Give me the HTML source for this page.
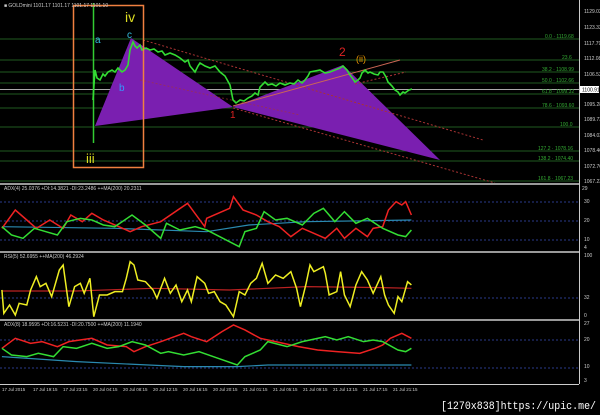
<!DOCTYPE html>
<html><head><style>
body{margin:0;background:#000;width:600px;height:415px;overflow:hidden;font-family:"Liberation Sans",sans-serif}
svg{display:block}
</style></head><body>
<svg width="600" height="415" viewBox="0 0 600 415">
<rect width="600" height="415" fill="#000"/>
<g stroke="#1f5a1f" stroke-width="1">
<line x1="0" y1="39" x2="579" y2="39"/><line x1="0" y1="60" x2="579" y2="60"/>
<line x1="0" y1="72" x2="579" y2="72"/><line x1="0" y1="83" x2="579" y2="83"/>
<line x1="0" y1="94" x2="579" y2="94"/><line x1="0" y1="108" x2="579" y2="108"/>
<line x1="0" y1="127" x2="579" y2="127"/><line x1="0" y1="151" x2="579" y2="151"/>
<line x1="0" y1="161" x2="579" y2="161"/><line x1="0" y1="181" x2="579" y2="181"/>
</g>
<line x1="0" y1="89.5" x2="579" y2="89.5" stroke="#aaa" stroke-width="1"/>
<polygon points="95,126 131,38 233,107" fill="#7a1fb0"/>
<polygon points="233,107 343,65 440,160" fill="#7a1fb0"/>
<line x1="143" y1="40" x2="483" y2="140" stroke="#a33" stroke-dasharray="2,2"/>
<line x1="233" y1="108" x2="495" y2="183" stroke="#a33" stroke-dasharray="2,2"/>
<line x1="140" y1="80" x2="300" y2="115" stroke="#a33" stroke-dasharray="2,2" opacity="0.6"/>
<line x1="233" y1="106" x2="400" y2="60" stroke="#c65" stroke-width="1"/>
<line x1="355" y1="84" x2="406" y2="72" stroke="#a33" stroke-dasharray="2,2"/>
<line x1="93.5" y1="3" x2="93.5" y2="143" stroke="#3c3" stroke-width="1.5"/>
<polyline fill="none" stroke="#3d3" stroke-width="1.6" points="93,100 95,70 97,78 100,80 103,74 105,76 108,72 112,70 115,72 118,68 122,72 125,70 128,65 130,50 133,42 135,46 137,48 140,45 142,50 146,48 150,50 154,49 158,52 162,51 165,55 170,53 175,55 180,58 185,62 188,60 190,66 195,72 198,66 200,63 205,66 210,68 215,66 220,72 225,76 230,85 233,100 236,103 240,100 244,101 248,98 252,96 255,93 258,95 260,87 265,82 268,85 272,84 276,86 280,83 285,85 290,83 294,84 298,80 302,83 305,80 308,76 310,72 315,71 320,70 325,73 330,72 335,70 340,68 343,66 347,70 350,75 353,79 355,82 358,80 360,78 362,73 365,70 368,73 370,72 374,74 378,75 380,72 383,72 386,77 388,82 392,86 395,90 398,92 400,95 403,92 405,93 409,90 412,89"/>
<rect x="73.5" y="5.5" width="70" height="162" fill="none" stroke="#f08040" stroke-width="1.5"/>
<g font-size="10">
<text x="125" y="22" fill="#dd2" font-size="14">iv</text>
<text x="95" y="43" fill="#3bd">a</text>
<text x="127" y="38" fill="#3bd">c</text>
<text x="119" y="91" fill="#39f">b</text>
<text x="86" y="163" fill="#dd2" font-size="13">iii</text>
<text x="230" y="118" fill="#d22">1</text>
<text x="339" y="56" fill="#d22" font-size="12">2</text>
<text x="356" y="62" fill="#e90" font-size="9">(ii)</text>
</g>
<g font-size="5" fill="#3a3">
<text x="545" y="38">0.0 · 1119.68</text><text x="562" y="59">23.6</text>
<text x="542" y="71">38.2 · 1108.99</text><text x="542" y="82">50.0 · 1102.66</text>
<text x="542" y="93">61.8 · 1099.32</text><text x="542" y="107">78.6 · 1093.60</text>
<text x="560" y="126">100.0</text><text x="538" y="150">127.2 · 1078.16</text>
<text x="538" y="160">138.2 · 1074.40</text><text x="538" y="180">161.8 · 1067.23</text>
</g>
<text x="4" y="7" font-size="5" fill="#ccc">■ GOLDmini  1101.17  1101.17  1101.17 1101.10</text>
<rect x="0" y="183" width="579" height="2" fill="#999"/>
<rect x="0" y="251" width="579" height="2" fill="#999"/>
<rect x="0" y="319" width="579" height="2" fill="#999"/>
<line x1="579.5" y1="0" x2="579.5" y2="384" stroke="#ccc"/>
<line x1="0" y1="384.5" x2="579" y2="384.5" stroke="#ccc"/>
<g font-size="5" fill="#ccc">
<text x="584" y="13">1129.03</text><text x="584" y="29">1123.33</text><text x="584" y="45">1117.79</text>
<text x="584" y="60">1112.08</text><text x="584" y="76">1106.53</text><text x="584" y="106">1095.28</text>
<text x="584" y="121">1089.73</text><text x="584" y="137">1084.03</text><text x="584" y="152">1078.46</text>
<text x="584" y="168">1072.76</text><text x="584" y="183">1067.23</text>
<text x="582" y="190">29</text><text x="584" y="203">30</text><text x="584" y="222">20</text><text x="584" y="241">10</text><text x="584" y="249">4</text>
<text x="584" y="257">100</text><text x="584" y="299">32</text><text x="584" y="317">0</text>
<text x="584" y="325">27</text><text x="584" y="341">20</text><text x="584" y="368">10</text><text x="584" y="382">3</text>
</g>
<rect x="580" y="86" width="19" height="7" fill="#fff"/>
<text x="582" y="91.5" font-size="5" fill="#000">1100.91</text>
<g font-size="5" fill="#ccc">
<text x="4" y="190">ADX(4) 25.0376  +DI:14.3821  -DI:23.2486  ++MA(200) 20.2311</text>
<text x="4" y="258">RSI(5) 52.6955  ++MA(200) 46.2924</text>
<text x="4" y="326">ADX(8) 18.9595  +DI:16.5231  -DI:20.7500  ++MA(200) 11.1940</text>
</g>
<g stroke="#2a3a8a" stroke-dasharray="2,2">
<line x1="0" y1="202" x2="579" y2="202"/><line x1="0" y1="221" x2="579" y2="221"/><line x1="0" y1="240" x2="579" y2="240"/>
<line x1="0" y1="298" x2="579" y2="298"/>
<line x1="0" y1="340" x2="579" y2="340"/><line x1="0" y1="368" x2="579" y2="368"/>
</g>
<g transform="translate(0,195) scale(0.3827,0.3333)" fill="none">
<polyline stroke="#2a8ab0" vector-effect="non-scaling-stroke" stroke-width="1.2" points="5,95 300,100 540,110 650,90 800,80 1075,75"/>
<polyline stroke="#e22" vector-effect="non-scaling-stroke" stroke-width="1.5" points="5,100 40,45 70,75 95,100 130,75 165,100 185,60 215,80 240,55 270,75 300,90 340,110 370,95 420,80 490,25 535,95 540,70 600,40 610,5 635,45 670,60 700,80 730,95 760,125 790,100 820,115 850,130 880,100 900,130 930,100 960,125 975,100 1000,95 1015,45 1035,20 1050,30 1060,20 1075,60"/>
<polyline stroke="#3d3" vector-effect="non-scaling-stroke" stroke-width="1.5" points="5,95 30,120 60,130 90,100 120,110 150,120 175,80 210,70 240,75 270,90 300,95 345,60 380,90 420,130 435,85 470,105 510,95 540,105 625,155 640,110 670,100 690,50 720,75 750,70 790,90 820,55 845,40 875,80 900,50 930,85 960,70 1000,100 1040,120 1060,125 1075,105"/>
<polyline stroke="#b22" vector-effect="non-scaling-stroke" stroke-width="1.2" points="5,288 200,288 400,280 600,285 800,275 1000,278 1075,280"/>
<polyline stroke="#ee2" vector-effect="non-scaling-stroke" stroke-width="1.5" points="5,285 10,355 25,330 40,360 50,325 70,330 80,285 95,245 105,275 120,265 135,305 155,225 165,210 180,335 195,275 210,265 220,295 235,250 245,365 260,300 280,300 300,290 320,290 330,250 340,200 350,210 360,255 380,260 400,285 410,310 430,250 445,295 460,270 475,320 490,285 500,320 515,245 535,265 545,295 560,290 575,320 590,330 610,365 625,290 640,300 655,265 670,250 685,205 700,265 720,240 740,250 760,230 775,280 785,335 800,265 810,210 820,230 845,215 850,235 860,300 880,290 890,230 900,300 915,335 930,270 945,230 960,255 975,295 995,245 1005,300 1015,330 1030,355 1040,305 1050,320 1065,260 1075,270"/>
<polyline stroke="#2a8ab0" vector-effect="non-scaling-stroke" stroke-width="1.2" points="5,485 200,500 480,515 620,515 700,510 1075,510"/>
<polyline stroke="#e22" vector-effect="non-scaling-stroke" stroke-width="1.5" points="5,460 40,430 80,445 110,440 150,455 180,440 240,430 280,450 330,455 350,470 380,455 420,440 480,415 500,425 540,440 580,410 610,390 640,405 680,430 720,440 780,455 830,465 880,470 940,475 980,460 1000,450 1020,430 1050,415 1075,430"/>
<polyline stroke="#3d3" vector-effect="non-scaling-stroke" stroke-width="1.5" points="5,460 30,480 70,485 100,475 140,485 165,455 200,460 240,445 280,460 310,455 345,440 380,450 420,475 440,470 480,480 520,470 570,490 620,510 640,485 680,465 700,440 750,455 790,440 810,435 850,425 880,435 910,425 950,440 975,435 1000,440 1040,465 1060,470 1075,460"/>
</g>
<g font-size="4.5" fill="#ccc">
<text x="2" y="391">17 Jul 2015</text><text x="33" y="391">17 Jul 19:15</text><text x="63" y="391">17 Jul 23:15</text>
<text x="93" y="391">20 Jul 04:15</text><text x="123" y="391">20 Jul 08:15</text><text x="153" y="391">20 Jul 12:15</text>
<text x="183" y="391">20 Jul 16:15</text><text x="213" y="391">20 Jul 20:15</text><text x="243" y="391">21 Jul 01:15</text>
<text x="273" y="391">21 Jul 05:15</text><text x="303" y="391">21 Jul 09:15</text><text x="333" y="391">21 Jul 13:15</text>
<text x="363" y="391">21 Jul 17:15</text><text x="393" y="391">21 Jul 21:15</text>
</g>
<text x="441" y="409" font-size="11" fill="#fff" font-family="Liberation Mono,monospace" textLength="155" lengthAdjust="spacingAndGlyphs">[1270x838]https://upic.me/</text>
</svg>
</body></html>
